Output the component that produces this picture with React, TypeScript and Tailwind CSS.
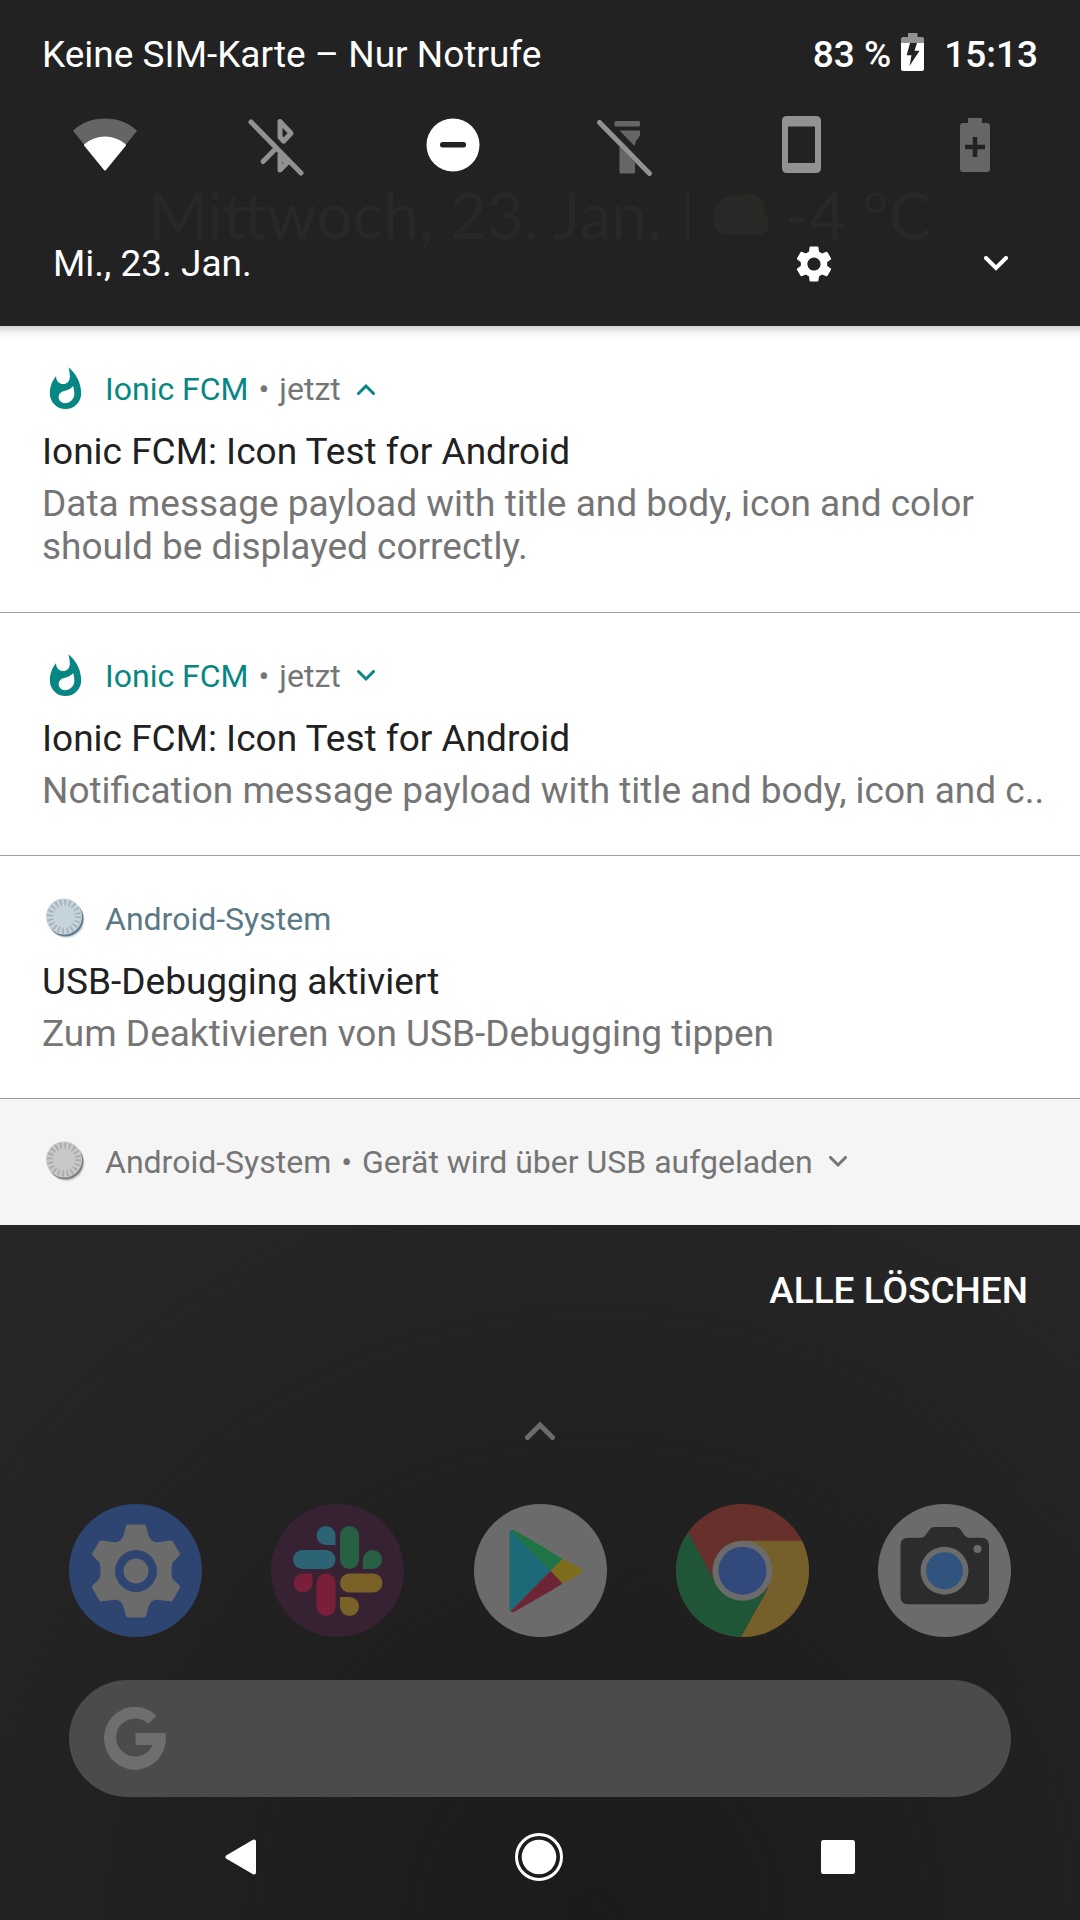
import type { ReactNode } from 'react';
import { MdSettings } from 'react-icons/md';

function WifiIcon() {
  return (
    <svg viewBox="0 0 66 66" className="size-[66px]" aria-hidden="true">
      <path d="M33 58L1.5 18.8C10 10.8 21 7 33 7s23 3.800 31.500 11.800z" fill="#656565" stroke="#656565" strokeLinejoin="round" />
      <path d="M33 57.500L13 33c6-5 12-7.500 20-7.500S47 28 53 33z" fill="#fff" stroke="#fff" strokeWidth="2" strokeLinejoin="round" />
    </svg>
  );
}

function BluetoothOffIcon() {
  return (
    <svg viewBox="0 0 66 66" className="size-[66px]" fill="none" stroke="#929292" strokeWidth="5" strokeLinecap="round" strokeLinejoin="round" aria-hidden="true">
      <path d="M34 25V9.500L45 21.200l-7.500 8L34 25" />
      <path d="M17 49.500l13-13" />
      <path d="M34 43v15l7-7L34 43" />
      <path d="M5 10l50 51" />
    </svg>
  );
}

function DoNotDisturbIcon() {
  return (
    <svg viewBox="0 0 66 66" className="size-[66px]" aria-hidden="true">
      <circle cx="33" cy="33" r="26.500" fill="#fff" />
      <rect x="20" y="30" width="26" height="5.500" rx="2.500" fill="#222" />
    </svg>
  );
}

function FlashlightOffIcon() {
  return (
    <svg viewBox="0 0 66 66" className="size-[66px]" aria-hidden="true">
      <g fill="#666">
        <rect x="20.500" y="9" width="25.500" height="5.500" rx="1.500" />
        <path d="M25.500 18.500H46V23q-1 3-4 6l-1.500 5z" />
        <path d="M25.500 34.500l15.500 16V60q0 1.500-1.500 1.500H27q-1.500 0-1.500-1.500z" />
      </g>
      <path d="M5.500 10.500l50 51" stroke="#929292" strokeWidth="5" strokeLinecap="round" />
    </svg>
  );
}

function PortraitIcon() {
  return (
    <svg viewBox="0 0 66 66" className="size-[66px]" aria-hidden="true">
      <path fillRule="evenodd" fill="#929292" d="M19 4h29q5 0 5 5v47q0 5-5 5H19q-5 0-5-5V9q0-5 5-5zM20 14.500V51h27V14.500z" />
    </svg>
  );
}

function BatterySaverIcon() {
  return (
    <svg viewBox="0 0 66 66" className="size-[66px]" aria-hidden="true">
      <path d="M26 6h14v5h5q3 0 3 3v43q0 3-3 3H21q-3 0-3-3V14q0-3 3-3h5z" fill="#666" />
      <path d="M33 25v20M23 35h20" stroke="#222" strokeWidth="4.500" />
    </svg>
  );
}

function BatteryChargingIcon() {
  return (
    <svg viewBox="0 0 23 38" className="h-[38px] w-[23px]" aria-hidden="true">
      <path d="M7 0h9.500v4H21q2 0 2 2v5H0V6q0-2 2-2h5z" fill="#929292" />
      <path d="M0 10h23v26q0 2-2 2H2q-2 0-2-2z" fill="#fff" />
      <path d="M9 10h7l-2.500 7.700h5L8.500 33l2-10.700H5.700z" fill="#222" />
    </svg>
  );
}

function Chevron({ up = false, className }: { up?: boolean; className: string }) {
  return (
    <svg viewBox="0 0 24 16" className={className} fill="none" stroke="currentColor" strokeWidth="4" aria-hidden="true">
      <path d={up ? 'M2 14L12 4l10 10' : 'M2 2l10 10L22 2'} strokeLinecap="round" />
    </svg>
  );
}

function FlameIcon() {
  return (
    <svg viewBox="0 0 24 24" className="size-[47px]" fill="#078783" aria-hidden="true">
      <path d="M13.500.67s.74 2.650.74 4.800c0 2.060-1.350 3.730-3.410 3.730-2.070 0-3.630-1.670-3.630-3.730l.03-.36C5.210 7.510 4 10.620 4 14c0 4.420 3.580 8 8 8s8-3.580 8-8C20 8.610 17.410 3.800 13.500.67zM11.710 19c-1.780 0-3.220-1.400-3.220-3.140 0-1.620 1.050-2.760 2.810-3.120 1.770-.36 3.600-1.210 4.620-2.580.39 1.290.59 2.650.59 4.040 0 2.650-2.150 4.800-4.800 4.800z" />
    </svg>
  );
}

function SystemIcon({ face, shade, tick }: { face: string; shade: string; tick: string }) {
  return (
    <svg viewBox="0 0 47 47" className="size-[47px]" aria-hidden="true">
      <circle cx="24.500" cy="24" r="18" fill={face} opacity="0.700" />
      <circle cx="23.500" cy="22.500" r="18" fill={shade} />
      <circle cx="22" cy="20.500" r="18" fill={face} />
      <circle cx="22" cy="20.500" r="14" fill="none" stroke={tick} strokeWidth="6" strokeDasharray="1.600 2.798" />
    </svg>
  );
}

function Notification({
  icon,
  app,
  appClass,
  detail,
  chevron,
  chevronClass = '',
  title,
  body,
  className,
}: {
  icon: ReactNode;
  app: string;
  appClass: string;
  detail?: string;
  chevron?: 'up' | 'down';
  chevronClass?: string;
  title?: string;
  body?: ReactNode;
  className: string;
}) {
  return (
    <article className={`px-[42px] pt-[38px] ${className}`}>
      <header className="flex h-[50px] items-center text-[32px] text-[#757575]">
        {icon}
        <span className={`ml-4 ${appClass}`}>{app}</span>
        {detail && (
          <>
            <span className="mx-[10px]">•</span>
            <span>{detail}</span>
          </>
        )}
        {chevron && (
          <button type="button" aria-label={chevron === 'up' ? 'Minimieren' : 'Maximieren'} className={`ml-4 ${chevronClass}`}>
            <Chevron up={chevron === 'up'} className="h-3 w-[18px]" />
          </button>
        )}
      </header>
      {title && <h2 className="mt-4 text-[37px] leading-[43px] text-[#212121]">{title}</h2>}
      {body && <p className="mt-[9px] text-[37px] leading-[43px] text-[#757575]">{body}</p>}
    </article>
  );
}

function SettingsAppIcon() {
  return (
    <svg viewBox="0 0 133 133" className="size-[133px]" aria-hidden="true">
      <circle cx="66.500" cy="66.500" r="66.500" fill="#2d4570" />
      <path
        d="M59 22.500H75L78 33Q80 39 87 40.500L102 38.500 109 50 101.500 58Q99.500 67 101.500 75.500L109 83 102 95.500 87 93.500Q80 95 78 101L75 111.500H59L56 101Q54 95 47 93.500L32 95.500 25 83 32.500 75.500Q34.500 67 32.500 58L25 50 32 38.500 47 40.500Q54 39 56 33Z"
        fill="#6b6b6b"
        stroke="#6b6b6b"
        strokeWidth="4"
        strokeLinejoin="round"
      />
      <circle cx="67" cy="67" r="21" fill="#2d4570" />
      <circle cx="67" cy="67" r="12.500" fill="#6b6b6b" />
    </svg>
  );
}

function SlackIcon() {
  return (
    <svg viewBox="0 0 133 133" className="size-[133px]" aria-hidden="true">
      <circle cx="66.500" cy="66.500" r="66.500" fill="#362232" />
      <g fill="#2c6475">
        <rect x="22" y="46" width="42.500" height="19" rx="9.500" />
        <path d="M64.500 41H55a9.500 9.500 0 1 1 9.500-9.500z" />
      </g>
      <g fill="#286044">
        <rect x="69" y="22" width="19" height="43" rx="9.500" />
        <path d="M92 65v-9.500a9.500 9.500 0 1 1 9.500 9.500z" />
      </g>
      <g fill="#7a6127">
        <rect x="69" y="69.500" width="42.500" height="19" rx="9.500" />
        <path d="M69 93h9.500a9.500 9.500 0 1 1-9.500 9.500z" />
      </g>
      <g fill="#791f3a">
        <rect x="45.500" y="69.500" width="19" height="42.500" rx="9.500" />
        <path d="M41.500 69.500V79a9.500 9.500 0 1 1-9.500-9.500z" />
      </g>
    </svg>
  );
}

function PlayIcon() {
  return (
    <svg viewBox="0 0 133 133" className="size-[133px]" aria-hidden="true">
      <defs>
        <clipPath id="play-shape">
          <path d="M35.500 29q0-4 4-3L106 63q4.500 3.500 0 7L40 108q-4.500 1-4.500-3z" />
        </clipPath>
      </defs>
      <circle cx="66.500" cy="66.500" r="66.500" fill="#6b6b6b" />
      <g clipPath="url(#play-shape)">
        <path d="M35 25v84l41.500-42z" fill="#1c6a78" />
        <path d="M35 25l41.500 42L88.500 55 35 22z" fill="#1f7446" />
        <path d="M76.500 67l12-12L112 66.500 88.500 79.500z" fill="#7d6d1c" />
        <path d="M35 109l41.500-42 12 12.500L40 112z" fill="#6d2434" />
      </g>
    </svg>
  );
}

function ChromeIcon() {
  return (
    <svg viewBox="0 0 133 133" className="size-[133px]" aria-hidden="true">
      <defs>
        <clipPath id="chrome-disc">
          <circle cx="66.500" cy="66.500" r="66.500" />
        </clipPath>
      </defs>
      <g clipPath="url(#chrome-disc)">
        <rect width="133" height="133" fill="#68302c" />
        <path d="M66 36.700H133V133H65L92 84z" fill="#755f2b" />
        <path d="M12.500 29L38 76 66 96.500 92 84 65 133H0V29z" fill="#1f5637" />
      </g>
      <circle cx="66.500" cy="66.700" r="30" fill="#6b6b6b" />
      <circle cx="66.500" cy="66.700" r="24" fill="#32497c" />
    </svg>
  );
}

function CameraIcon() {
  return (
    <svg viewBox="0 0 133 133" className="size-[133px]" aria-hidden="true">
      <circle cx="66.500" cy="66.500" r="66.500" fill="#6b6b6b" />
      <path d="M30 33.700h13q3 0 5-3l3-4.500q2-3.200 6-3.200h20q4 0 6 3.200l3 4.500q2 3 5 3h12q8 0 8 8v51q0 7.600-8 7.600H30q-7.500 0-7.500-7.600v-51q0-8 7.500-8z" fill="#2c2c2c" />
      <circle cx="66.500" cy="66.700" r="24" fill="#6b6b6b" />
      <circle cx="66.500" cy="66.700" r="18.500" fill="#31547f" />
      <circle cx="99.500" cy="45" r="4" fill="#6b6b6b" />
    </svg>
  );
}

const quickSettings = [
  { label: 'WLAN', icon: <WifiIcon /> },
  { label: 'Bluetooth', icon: <BluetoothOffIcon /> },
  { label: 'Bitte nicht stören', icon: <DoNotDisturbIcon /> },
  { label: 'Taschenlampe', icon: <FlashlightOffIcon /> },
  { label: 'Hochformat', icon: <PortraitIcon /> },
  { label: 'Energiesparmodus', icon: <BatterySaverIcon /> },
];

const apps = [
  { label: 'Einstellungen', icon: <SettingsAppIcon /> },
  { label: 'Slack', icon: <SlackIcon /> },
  { label: 'Play Store', icon: <PlayIcon /> },
  { label: 'Chrome', icon: <ChromeIcon /> },
  { label: 'Kamera', icon: <CameraIcon /> },
];

export default function App() {
  return (
    <div className="flex min-h-screen flex-col bg-[radial-gradient(circle_at_55%_100%,#1b1b1b_0px,#202020_400px,#272727_850px)] font-[Roboto,sans-serif] text-white">
      <header className="relative bg-[#222222]">
        <div className="absolute inset-x-0 top-[176px] flex items-center justify-center font-[Lato,sans-serif] text-[64px] leading-[78px] whitespace-nowrap text-[#282828]" aria-hidden="true">
          <span>Mittwoch, 23. Jan.</span>
          <span className="mx-6 h-[50px] w-[3px] bg-[#282828]" />
          <svg viewBox="0 0 56 44" className="mr-4 h-11 w-14">
            <circle cx="37" cy="16" r="15" fill="#2a2823" />
            <path d="M13 42q-13-2-13-17Q1 8 14 4q20-8 27 13 14 2 15 14-1 10-10 11z" fill="#282826" />
          </svg>
          <span>-4 °C</span>
        </div>

        <div className="relative flex h-[108px] items-center justify-between px-[42px] pt-0.5 text-[37px]">
          <span>Keine SIM-Karte – Nur Notrufe</span>
          <div className="flex items-center font-medium">
            <span>83 %</span>
            <span className="mr-5 ml-2.5 pb-1.5">
              <BatteryChargingIcon />
            </span>
            <span>15:13</span>
          </div>
        </div>

        <div className="relative flex h-[73px] items-center justify-between px-[72px]">
          {quickSettings.map((q) => (
            <button key={q.label} type="button" aria-label={q.label}>
              {q.icon}
            </button>
          ))}
        </div>

        <div className="relative flex h-[145px] items-center pt-5 pr-[72px] pl-[53px]">
          <span className="text-[37px]">Mi., 23. Jan.</span>
          <button type="button" aria-label="Einstellungen" className="mr-[148px] ml-auto">
            <MdSettings className="size-[44px]" />
          </button>
          <button type="button" aria-label="Schnelleinstellungen öffnen">
            <Chevron className="h-4 w-6" />
          </button>
        </div>
      </header>

      <main className="bg-[linear-gradient(#d2d2d2,#f4f4f4_7px,#ffffff_14px)]">
        <Notification
          icon={<FlameIcon />}
          app="Ionic FCM"
          appClass="text-[#078783]"
          detail="jetzt"
          chevron="up"
          chevronClass="text-[#078783]"
          title="Ionic FCM: Icon Test for Android"
          body="Data message payload with title and body, icon and color should be displayed correctly."
          className="border-b border-[#9e9e9e] pb-11"
        />
        <Notification
          icon={<FlameIcon />}
          app="Ionic FCM"
          appClass="text-[#078783]"
          detail="jetzt"
          chevron="down"
          chevronClass="text-[#078783]"
          title="Ionic FCM: Icon Test for Android"
          body={<span className="whitespace-nowrap">Notification message payload with title and body, icon and c..</span>}
          className="border-b border-[#9e9e9e] pb-[43px]"
        />
        <Notification
          icon={<SystemIcon face="#c5d3da" shade="#607d8b" tick="#a3b0b7" />}
          app="Android-System"
          appClass="text-[#5a7985]"
          title="USB-Debugging aktiviert"
          body="Zum Deaktivieren von USB-Debugging tippen"
          className="border-b border-[#9e9e9e] pb-[43px]"
        />
        <Notification
          icon={<SystemIcon face="#c8c8c8" shade="#808080" tick="#a8a8a8" />}
          app="Android-System"
          appClass="text-[#757575]"
          detail="Gerät wird über USB aufgeladen"
          chevron="down"
          className="bg-[#f5f5f5] pb-[38px] text-[#757575]"
          chevronClass="text-[#757575]"
        />
      </main>

      <div className="flex h-[130px] items-center justify-end px-[52px] pt-0.5">
        <button type="button" className="text-[37px] font-medium">ALLE LÖSCHEN</button>
      </div>

      <div className="flex h-[149px] items-center justify-center text-[#6b6b6b]">
        <button type="button" aria-label="Alle Apps">
          <Chevron up className="h-5 w-[30px]" />
        </button>
      </div>

      <div className="flex justify-between px-[69px]">
        {apps.map((a) => (
          <button key={a.label} type="button" aria-label={a.label}>
            {a.icon}
          </button>
        ))}
      </div>

      <button type="button" aria-label="Google Suche" className="mx-[69px] mt-[43px] flex h-[117px] items-center rounded-full bg-[#4b4b4b] px-[35px]">
        <svg viewBox="0 0 63 63" className="size-[63px]" aria-hidden="true">
          <path d="M52.500 8.500A31 31.500 0 1 0 62 32Q62 29 61.500 26H31.500V38H48.500A19 19 0 1 1 44.500 17Z" fill="#6e6e6e" />
        </svg>
      </button>

      <nav className="mx-auto flex h-[120px] w-[61%] items-center justify-between px-3.5">
        <button type="button" aria-label="Zurück">
          <svg viewBox="0 0 32 36" className="h-9 w-8" aria-hidden="true">
            <path d="M2.500 18L29 2.500v31z" fill="#fff" stroke="#fff" strokeWidth="4" strokeLinejoin="round" />
          </svg>
        </button>
        <button type="button" aria-label="Startbildschirm">
          <svg viewBox="0 0 48 48" className="size-12" aria-hidden="true">
            <circle cx="24" cy="24" r="22.500" fill="none" stroke="#fff" strokeWidth="3" />
            <circle cx="24" cy="24" r="17.300" fill="#fff" />
          </svg>
        </button>
        <button type="button" aria-label="Übersicht">
          <svg viewBox="0 0 34 34" className="size-[34px]" aria-hidden="true">
            <rect width="34" height="34" rx="2.500" fill="#fff" />
          </svg>
        </button>
      </nav>
    </div>
  );
}
